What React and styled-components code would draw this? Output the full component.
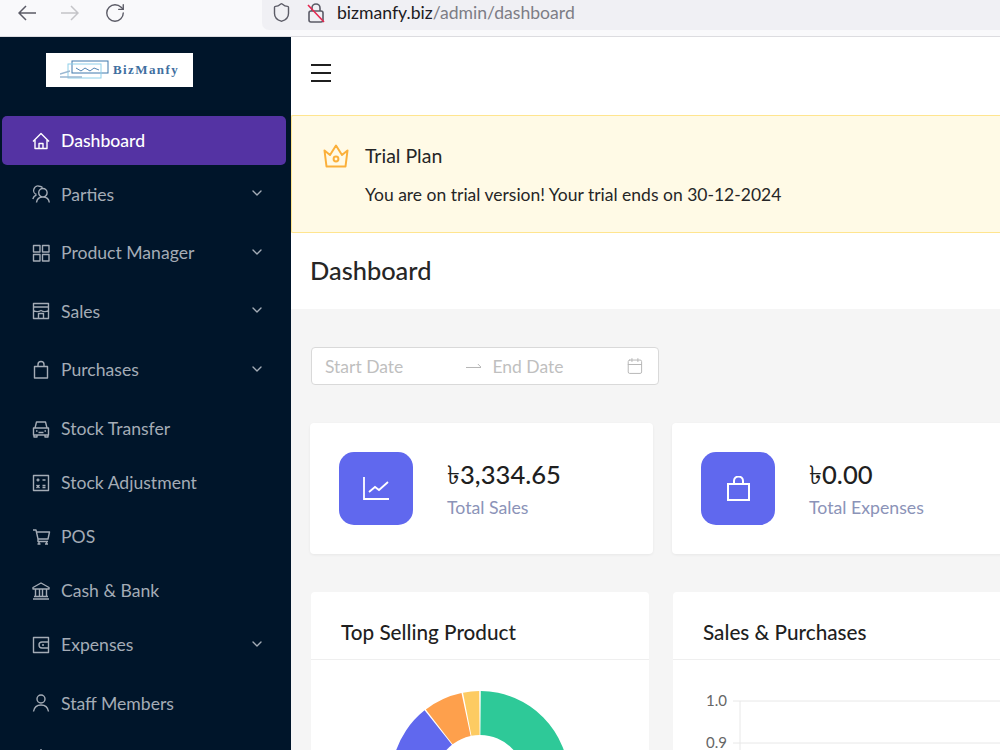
import React from 'react';
import styled, { createGlobalStyle } from 'styled-components';
import { RotateCw, Shield, ChevronDown, Calendar } from 'lucide-react';

const iconPaths = {
  home: 'M2 10.5L10 2.5l8 8M4 8.5v9h12v-9M8 17.5v-5h4v5',
  parties:
    'M5.5 10.5a4.2 4.2 0 0 1 3-8.2c1.2 0 2.2.5 3 1.3M5.5 10.8C3.6 11.6 2.3 13 1.8 15M7.7 8.7a4.2 4.2 0 1 0 8.4 0 4.2 4.2 0 1 0-8.4 0M5.5 18.5c.4-3.2 3-5.5 6.4-5.5s6 2.3 6.4 5.5',
  grid: 'M2.5 2.5h6.5v6.5H2.5zM11.5 2.5H18v6.5h-6.5zM2.5 11.5h6.5V18H2.5zM11.5 11.5H18V18h-6.5z',
  store: 'M2.5 2.5h15v15h-15zM2.5 6h15M2.5 9.5c2.5 1.5 5 1.5 7.5 0 2.5 1.5 5 1.5 7.5 0M7.5 17.5v-5h5v5',
  bag: 'M3.5 6.5h13V18h-13zM7 6.5V4.5a3 3 0 0 1 6 0v2',
  car: 'M4 9l1.5-6h9L16 9M2.5 9h15v7h-15zM3 16v2h3v-2M14 16v2h3v-2M7.5 13.5h5M5 12h1.5M13.5 12H15',
  calc: 'M2.5 2.5h15v15h-15zM5.5 7h3M7 5.5v3M11.5 7h3M5.5 12l3 3M8.5 12l-3 3M11.5 12.5h3M11.5 14.5h3',
  cart: 'M2 3h3l2 9h10l1.5-7H5.5M7 12v2.5h10M8 14.5v3M9.5 17H6.5M15.5 14.5v3M17 17h-3',
  bank: 'M10 2l8 4.5V8H2V6.5zM4.5 8.5v7M8.5 8.5v7M11.5 8.5v7M15.5 8.5v7M3 15.5h14M2 18h16',
  wallet: 'M2.5 2.5h15v15h-15zM17.5 7h-6.5a3 3 0 0 0 0 6h6.5M11 10h2',
  user: 'M6 6a4 4 0 1 0 8 0 4 4 0 1 0-8 0M2.5 18.5c.7-4 3.5-6.5 7.5-6.5s6.8 2.5 7.5 6.5',
  report: 'M3 18V12M10 18V2M17 18V8',
};

const menu = [
  { label: 'Dashboard', icon: 'home', active: true },
  { label: 'Parties', icon: 'parties', sub: true },
  { label: 'Product Manager', icon: 'grid', sub: true },
  { label: 'Sales', icon: 'store', sub: true },
  { label: 'Purchases', icon: 'bag', sub: true },
  { label: 'Stock Transfer', icon: 'car' },
  { label: 'Stock Adjustment', icon: 'calc' },
  { label: 'POS', icon: 'cart' },
  { label: 'Cash & Bank', icon: 'bank' },
  { label: 'Expenses', icon: 'wallet', sub: true },
  { label: 'Staff Members', icon: 'user' },
  { icon: 'report' },
];

function slice(cx, cy, r, r2, from, to) {
  const pt = (rad, deg) => {
    const a = (deg * Math.PI) / 180;
    return `${cx + rad * Math.sin(a)} ${cy - rad * Math.cos(a)}`;
  };
  return `M${pt(r, from)} A${r} ${r} 0 0 1 ${pt(r, to)} L${pt(r2, to)} A${r2} ${r2} 0 0 0 ${pt(r2, from)} Z`;
}

export default function App() {
  return (
    <>
      <GlobalStyle />
      <Page>
        <BrowserBar>
          <NavIcons>
            <svg viewBox="0 0 18 16" width="18" height="16">
              <path d="M18 8H1M8 1L1 8l7 7" fill="none" stroke="#5b5b66" strokeWidth="1.5" />
            </svg>
            <svg viewBox="0 0 18 16" width="18" height="16">
              <path d="M0 8h17M10 1l7 7-7 7" fill="none" stroke="#c4c4c8" strokeWidth="1.5" />
            </svg>
            <RotateCw size={22} strokeWidth={1.5} color="#5b5b66" />
          </NavIcons>
          <UrlField>
            <Shield size={21} strokeWidth={1.6} color="#5b5b66" />
            <LockIcon viewBox="0 0 20 22" width="20" height="22">
              <rect x="3" y="9" width="14" height="11" rx="2" fill="none" stroke="#5b5b66" strokeWidth="1.6" />
              <path d="M6 9V6a4 4 0 0 1 8 0v3" fill="none" stroke="#5b5b66" strokeWidth="1.6" />
              <path d="M2 3l16 17" stroke="#e5264f" strokeWidth="1.6" />
            </LockIcon>
            <UrlText>
              <strong>bizmanfy.biz</strong>/admin/dashboard
            </UrlText>
          </UrlField>
        </BrowserBar>
        <Body>
          <Sidebar>
            <LogoBox>
              <svg viewBox="0 0 50 20" width="50" height="20">
                <rect x="12" y="1" width="36" height="12" fill="none" stroke="#3f78ad" strokeWidth="1" />
                <rect x="8" y="4" width="33" height="14" fill="none" stroke="#8fd0ea" strokeWidth="1" />
                <path d="M16 8l5 3 4-3 5 3 4-3 5 2" fill="none" stroke="#3f78ad" strokeWidth="0.9" />
                <path d="M0 14l10-3M0 17h22" stroke="#9bb8d2" strokeWidth="1.4" />
              </svg>
              <LogoText>BizManfy</LogoText>
            </LogoBox>
            <Menu>
              {menu.map((item) => (
                <MenuSlot key={item.icon} $sub={item.sub} $active={item.active}>
                  <MenuItem $active={item.active}>
                    <svg viewBox="0 0 20 20" width="20" height="20">
                      <path d={iconPaths[item.icon]} fill="none" stroke="currentColor" strokeWidth="1.4" strokeLinejoin="round" />
                    </svg>
                    <span>{item.label}</span>
                    {item.sub && (
                      <Chevron>
                        <ChevronDown size={16} strokeWidth={2} />
                      </Chevron>
                    )}
                  </MenuItem>
                </MenuSlot>
              ))}
            </Menu>
          </Sidebar>
          <Main>
            <TopBar>
              <svg viewBox="0 0 20 18" width="20" height="18">
                <path d="M0 1h20M0 9h20M0 17h20" stroke="#1f1f1f" strokeWidth="2" />
              </svg>
            </TopBar>
            <Alert>
              <CrownIcon viewBox="0 0 26 24" width="26" height="24">
                <path d="M1.5 6.5L7 11l6-9.5 6 9.5 5.5-4.5-2 16h-19z" fill="none" stroke="#fbb03b" strokeWidth="2" strokeLinejoin="round" />
                <circle cx="13" cy="15" r="2.4" fill="none" stroke="#fbb03b" strokeWidth="2" />
              </CrownIcon>
              <AlertText>
                <AlertTitle>Trial Plan</AlertTitle>
                <AlertBody>You are on trial version! Your trial ends on 30-12-2024</AlertBody>
              </AlertText>
            </Alert>
            <PageHeader>Dashboard</PageHeader>
            <Content>
              <DatePicker>
                <DateHolder>Start Date</DateHolder>
                <svg viewBox="0 0 16 6" width="16" height="6">
                  <path d="M0 4.5h15.5L12 1" fill="none" stroke="#b5b5b5" strokeWidth="1" />
                </svg>
                <DateHolder $end>End Date</DateHolder>
                <Calendar size={18} strokeWidth={1.3} color="#b5b5b5" />
              </DatePicker>
              <StatRow>
                <StatCard>
                  <StatIcon>
                    <svg viewBox="0 0 26 23" width="26" height="23">
                      <path d="M1 0v22h25M6 15l6-5 4 3 9-8" fill="none" stroke="#fff" strokeWidth="1.8" />
                    </svg>
                  </StatIcon>
                  <div>
                    <StatValue>৳3,334.65</StatValue>
                    <StatLabel>Total Sales</StatLabel>
                  </div>
                </StatCard>
                <StatCard>
                  <StatIcon>
                    <svg viewBox="0 0 23 25" width="23" height="25">
                      <path d="M1 8h21v16H1zM7 8V5a4.5 4.5 0 0 1 9 0v3" fill="none" stroke="#fff" strokeWidth="2" />
                    </svg>
                  </StatIcon>
                  <div>
                    <StatValue>৳0.00</StatValue>
                    <StatLabel>Total Expenses</StatLabel>
                  </div>
                </StatCard>
              </StatRow>
              <ChartRow>
                <ChartCard>
                  <ChartTitle>Top Selling Product</ChartTitle>
                  <DonutWrap>
                    <svg viewBox="0 0 338 190" width="338" height="190">
                      <path d={slice(169, 120, 89, 45, 0.5, 180)} fill="#2ec998" />
                      <path d={slice(169, 120, 89, 45, 180, 321.5)} fill="#6068ee" />
                      <path d={slice(169, 120, 89, 45, 322.5, 348)} fill="#fea04c" />
                      <path d={slice(169, 120, 89, 45, 349, 359.5)} fill="#fdcb62" />
                    </svg>
                  </DonutWrap>
                </ChartCard>
                <ChartCard $wide>
                  <ChartTitle>Sales & Purchases</ChartTitle>
                  <svg viewBox="0 0 340 100" width="340" height="100">
                    <path d="M60 41H340M60 83H340M67 41V100" stroke="#e8e8e8" strokeWidth="1" fill="none" />
                    <AxisLabel x="54" y="46">1.0</AxisLabel>
                    <AxisLabel x="54" y="88">0.9</AxisLabel>
                  </svg>
                </ChartCard>
              </ChartRow>
            </Content>
          </Main>
        </Body>
      </Page>
    </>
  );
}

const GlobalStyle = createGlobalStyle`
  html, body {
    margin: 0;
    padding: 0;
    overflow: hidden;
  }
  body {
    font-family: Lato, "Noto Sans", "Liberation Sans", sans-serif;
  }
`;

const Page = styled.div`
  width: 1000px;
  height: 750px;
  overflow: hidden;
  display: flex;
  flex-direction: column;
`;

const BrowserBar = styled.div`
  height: 37px;
  flex: none;
  box-sizing: border-box;
  background: #f9f9fb;
  border-bottom: 1px solid #dcdce0;
  display: flex;
  align-items: flex-start;
`;

const NavIcons = styled.div`
  width: 262px;
  box-sizing: border-box;
  height: 25px;
  padding-left: 18px;
  display: flex;
  align-items: center;
  gap: 25px;
`;

const UrlField = styled.div`
  flex: 1;
  height: 30px;
  background: #f0f0f4;
  border-bottom-left-radius: 7px;
  display: flex;
  align-items: center;
  padding: 0 0 5px 9px;
  box-sizing: border-box;
`;

const LockIcon = styled.svg`
  margin-left: 14px;
`;

const UrlText = styled.div`
  margin-left: 11px;
  font-size: 17.6px;
  color: #7d7d85;
  strong {
    font-weight: 400;
    color: #1c1b22;
  }
`;

const Body = styled.div`
  flex: 1;
  display: flex;
  min-height: 0;
`;

const Sidebar = styled.div`
  width: 291px;
  flex: none;
  background: #00152a;
  padding: 16px 5px 0 2px;
  box-sizing: border-box;
  overflow: hidden;
`;

const LogoBox = styled.div`
  width: 147px;
  height: 34px;
  margin-left: 44px;
  background: #fff;
  display: flex;
  align-items: center;
  justify-content: center;
  gap: 3px;
`;

const LogoText = styled.span`
  font-family: "Liberation Serif", serif;
  font-weight: 700;
  font-size: 13px;
  letter-spacing: 1.4px;
  color: #3f6f9f;
`;

const Menu = styled.div`
  margin-top: 29px;
`;

const MenuSlot = styled.div`
  height: ${(p) => (p.$sub ? '58.6px' : p.$active ? '53.7px' : '54px')};
`;

const MenuItem = styled.div`
  height: 49px;
  border-radius: 5px;
  padding: 0 21px 0 29px;
  display: flex;
  align-items: center;
  gap: 10px;
  font-size: 17.6px;
  font-weight: ${(p) => (p.$active ? 500 : 400)};
  color: ${(p) => (p.$active ? '#fff' : '#a4acb6')};
  background: ${(p) => (p.$active ? '#5433a3' : 'transparent')};
  svg {
    flex: none;
  }
`;

const Chevron = styled.span`
  margin-left: auto;
  margin-bottom: 2px;
  display: flex;
`;

const Main = styled.div`
  flex: 1;
  min-width: 0;
  background: #f5f5f5;
  overflow: hidden;
`;

const TopBar = styled.div`
  height: 78px;
  box-sizing: border-box;
  background: #fff;
  padding: 0 0 6px 20px;
  display: flex;
  align-items: center;
`;

const Alert = styled.div`
  height: 118px;
  box-sizing: border-box;
  background: #fffae6;
  border: 1px solid #ffe58f;
  border-right: none;
  border-radius: 2px 0 0 2px;
  padding: 26px 0 0 31px;
  display: flex;
  gap: 16px;
`;

const CrownIcon = styled.svg`
  margin-top: 2px;
  flex: none;
`;

const AlertText = styled.div`
  color: #262626;
`;

const AlertTitle = styled.div`
  font-size: 19.5px;
  line-height: 28px;
`;

const AlertBody = styled.div`
  font-size: 17.5px;
  line-height: 24px;
  margin-top: 13px;
`;

const PageHeader = styled.div`
  height: 76px;
  box-sizing: border-box;
  background: #fff;
  padding: 0 0 2px 19px;
  display: flex;
  align-items: center;
  font-size: 25.4px;
  font-weight: 500;
  color: #262626;
`;

const Content = styled.div`
  padding: 38px 0 0 19px;
`;

const DatePicker = styled.div`
  width: 348px;
  height: 38px;
  margin-left: 1px;
  box-sizing: border-box;
  border: 1px solid #d9d9d9;
  border-radius: 4px;
  background: #fff;
  padding: 0 14px 0 13px;
  display: flex;
  align-items: center;
`;

const DateHolder = styled.span`
  width: ${(p) => (p.$end ? '135px' : '142px')};
  margin-left: ${(p) => (p.$end ? '11px' : '0')};
  font-size: 17.5px;
  color: #bfbfbf;
`;

const StatRow = styled.div`
  display: flex;
  gap: 19px;
  margin-top: 38px;
`;

const StatCard = styled.div`
  width: 343px;
  height: 131px;
  flex: none;
  box-sizing: border-box;
  background: #fff;
  border-radius: 4px;
  box-shadow: 0 1px 3px rgba(0, 0, 0, 0.06);
  padding-left: 29px;
  display: flex;
  align-items: center;
  gap: 34px;
`;

const StatIcon = styled.div`
  width: 74px;
  height: 73px;
  border-radius: 15px;
  background: #6068ee;
  color: #fff;
  display: flex;
  align-items: center;
  justify-content: center;
`;

const StatValue = styled.div`
  font-size: 25.6px;
  font-weight: 500;
  line-height: 32px;
  color: #1f1f1f;
`;

const StatLabel = styled.div`
  font-size: 17.7px;
  line-height: 24px;
  margin-top: 6px;
  color: #8b93b8;
`;

const ChartRow = styled.div`
  display: flex;
  gap: 24px;
  margin: 38px 0 0 1px;
`;

const ChartCard = styled.div`
  width: ${(p) => (p.$wide ? '400px' : '338px')};
  height: 300px;
  flex: none;
  background: #fff;
  border-radius: 4px;
`;

const ChartTitle = styled.div`
  height: 68px;
  box-sizing: border-box;
  border-bottom: 1px solid #efefef;
  padding: 12px 0 0 30px;
  display: flex;
  align-items: center;
  font-size: 20.7px;
  font-weight: 500;
  color: #1f1f1f;
`;

const DonutWrap = styled.div`
  height: 190px;
`;

const AxisLabel = styled.text`
  font-size: 15px;
  fill: #666;
  text-anchor: end;
`;
